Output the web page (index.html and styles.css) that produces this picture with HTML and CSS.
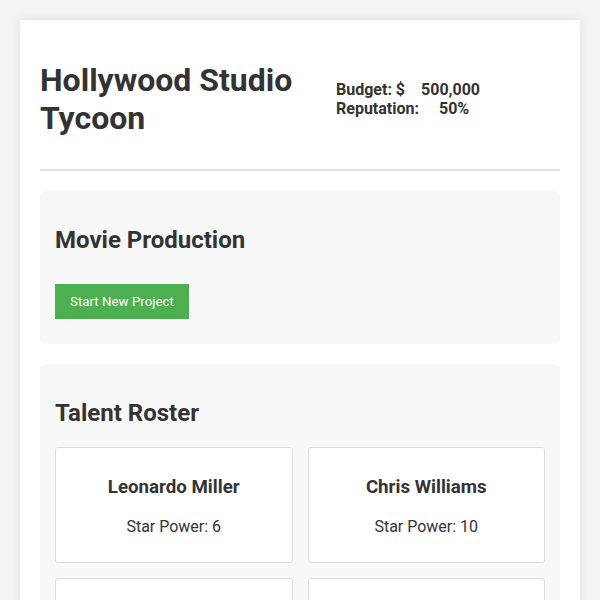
FILE: index.html
```html
<!DOCTYPE html>
<html lang="en">

<head>
    <meta charset="utf-8">
    <meta name="viewport" content="width=device-width, initial-scale=1.0">
    <title>Hollywood Studio Tycoon</title>
    <link rel="stylesheet" href="styles.css">
</head>

<body>
    <div class="game_container">

        <header>
            <h1>Hollywood Studio Tycoon</h1>
            <div class="stats">
                <div>Budget: $ <span class="value">500,000</span></div>
                <div>Reputation: <span class="value rep">50%</span></div>
            </div>
        </header>

        <section class="panel">
            <h2>Movie Production</h2>
            <button class="start_button">Start New Project</button>
        </section>

        <section class="panel">
            <h2>Talent Roster</h2>
            <div class="talent_grid">
                <article class="talent">
                    <h3>Leonardo Miller</h3>
                    <p>Star Power: 6</p>
                </article>
                <article class="talent">
                    <h3>Chris Williams</h3>
                    <p>Star Power: 10</p>
                </article>
                <article class="talent">
                    <h3>Emma Johnson</h3>
                    <p>Star Power: 8</p>
                </article>
                <article class="talent">
                    <h3>Scarlett Davis</h3>
                    <p>Star Power: 7</p>
                </article>
            </div>
        </section>

    </div>
</body>

</html>
```

FILE: styles.css
```css
* {
    box-sizing: border-box;
}

body {
    margin: 0;
    padding: 20px;
    background-color: #f4f4f4;
    font-family: Roboto, "Liberation Sans", sans-serif;
    color: #333;
}

.game_container {
    max-width: 800px;
    margin: 0 auto;
    padding: 20px;
    background-color: white;
    box-shadow: 0 0 10px rgba(0, 0, 0, 0.1);
}

header {
    display: flex;
    align-items: center;
    padding-bottom: 10px;
    border-bottom: 2px solid #e0e0e0;
    margin-bottom: 20px;
}

h1 {
    flex: 1;
    font-size: 32px;
}

.stats {
    width: 224px;
    font-weight: bold;
}

.value {
    margin-left: 12px;
}

.value.rep {
    margin-left: 16px;
}

.panel {
    background-color: #f8f8f8;
    border-radius: 5px;
    padding: 15px;
    margin-bottom: 20px;
}

h2 {
    font-size: 24px;
}

.start_button {
    font-family: Roboto, "Liberation Sans", sans-serif;
    background-color: #4caf50;
    color: white;
    border: none;
    padding: 10px 15px;
    margin: 10px 0;
    cursor: pointer;
}

.start_button:hover {
    background-color: #45a049;
}

.talent_grid {
    display: grid;
    grid-template-columns: repeat(2, 1fr);
    gap: 15px;
}

.talent {
    background-color: white;
    border: 1px solid #ddd;
    border-radius: 3px;
    padding: 10px;
    text-align: center;
}
```
